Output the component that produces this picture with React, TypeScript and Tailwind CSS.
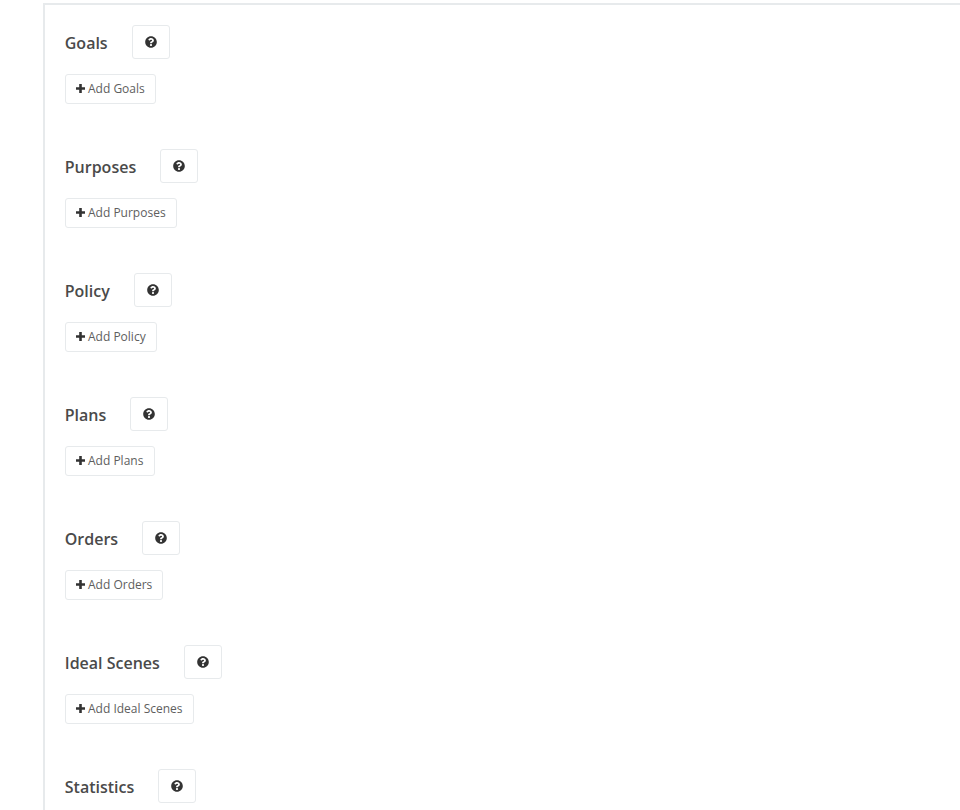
import { FaQuestionCircle } from 'react-icons/fa'

const sections = ['Goals', 'Purposes', 'Policy', 'Plans', 'Orders', 'Ideal Scenes', 'Statistics']

const PlusIcon = () => (
  <svg viewBox="0 0 9 9" className="mb-[1px] h-[9px] w-[9px] fill-[#333333]">
    <path d="M3.2 0h2.6v3.2H9v2.6H5.8V9H3.2V5.8H0V3.2h3.2z" />
  </svg>
)

const Section = ({ title, last }: { title: string; last: boolean }) => {
  return (
    <section className="h-[124px]">
      <div className="flex items-center gap-[24px]">
        <h3 className="-ml-[0.25px] h-[34px] pt-[2px] text-base font-semibold leading-[32px] text-[#4a4a4a]">{title}</h3>
        <button className="flex h-[34px] w-[38px] items-center justify-center rounded-[3px] border border-[#e7eaec] bg-white text-[#333333]">
          <FaQuestionCircle className="h-[12px] w-[12px]" />
        </button>
      </div>
      {!last && (
        <button className="mt-[15px] flex h-[30px] items-center gap-[3px] rounded-[3px] border border-[#e7eaec] bg-white pl-[10px] pr-[10.15px] text-xs text-[#5e5e5e]">
          <PlusIcon />
          Add {title}
        </button>
      )}
    </section>
  )
}

const App = () => {
  return (
    <div className="h-screen overflow-hidden bg-white pl-[43px] pt-[3px] font-['Open_Sans',sans-serif]">
      <main className="h-full border-l-2 border-t-2 border-[#e7eaec] pl-[20px] pt-[20px]">
        {sections.map((title, i) => (
          <Section key={title} title={title} last={i === sections.length - 1} />
        ))}
      </main>
    </div>
  )
}

export default App
